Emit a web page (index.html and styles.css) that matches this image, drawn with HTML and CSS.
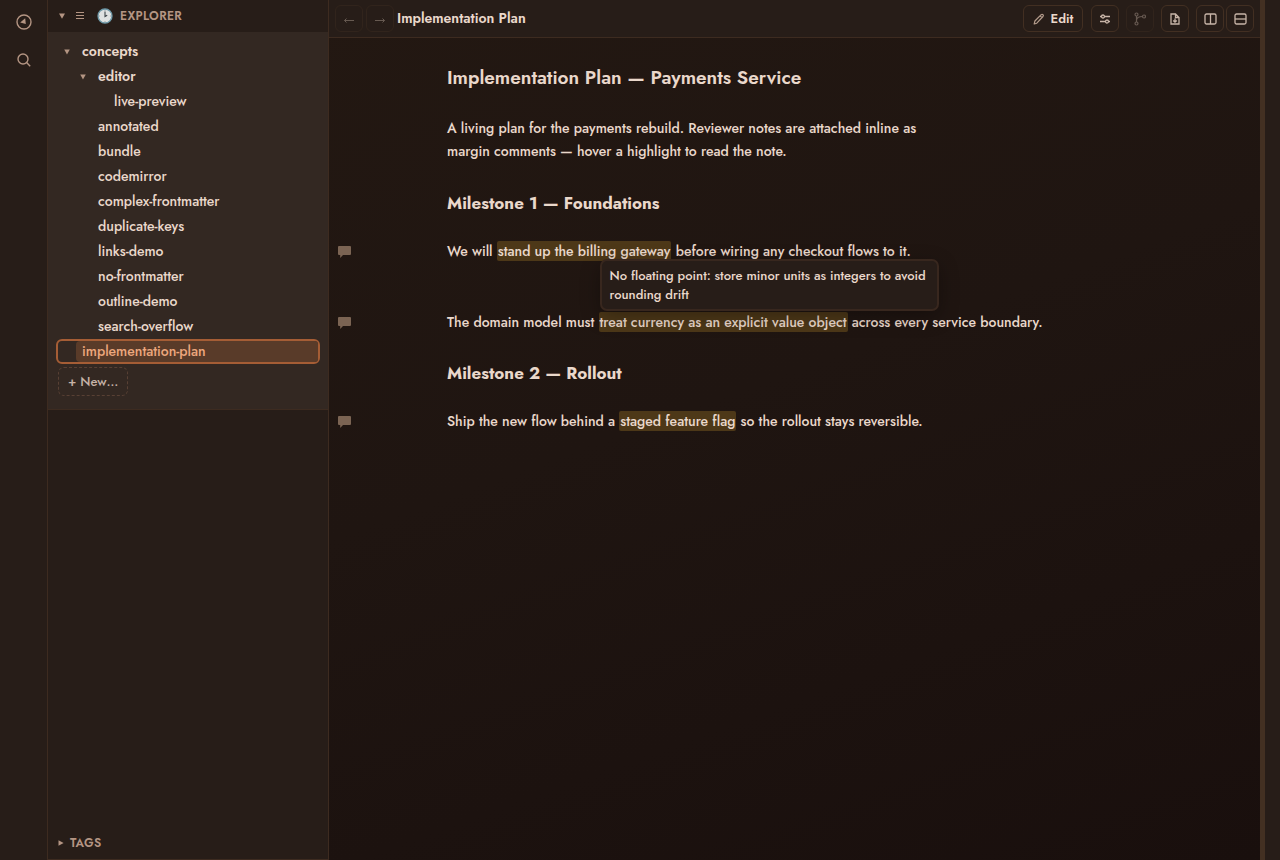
FILE: index.html
```html
<!DOCTYPE html>
<html lang="en">
<head>
<meta charset="utf-8">
<title>Implementation Plan</title>
<link rel="stylesheet" href="styles.css">
</head>
<body>
<div class="app">
  <nav class="rail" aria-label="Views">
    <button class="rail-btn" aria-label="Explorer">
      <svg width="18" height="18" viewBox="0 0 18 18" fill="none" stroke="currentColor" stroke-width="1.4"><circle cx="9" cy="9" r="7"/><path d="M5.2 9.4 10.2 5.2 10.8 11z" fill="currentColor" stroke="none"/></svg>
    </button>
    <button class="rail-btn" aria-label="Search">
      <svg width="18" height="18" viewBox="0 0 18 18" fill="none" stroke="currentColor" stroke-width="1.4"><circle cx="8" cy="8" r="5"/><path d="M11.6 11.6 15.2 15.2"/></svg>
    </button>
  </nav>

  <aside class="sidebar">
    <header class="section-head">
      <svg class="caret" width="8" height="8" viewBox="0 0 8 8"><path d="M1 1.5h6L4 6.8z" fill="currentColor"/></svg>
      <svg class="grip" width="8" height="8" viewBox="0 0 8 8"><path d="M0 .5h8M0 3.5h8M0 6.5h8" stroke="currentColor"/></svg>
      <svg class="clock" width="16" height="16" viewBox="0 0 16 16"><circle cx="8" cy="8" r="7" fill="#dfe2e1" stroke="#6e99a8" stroke-width="1.3"/><path d="M8 3.5V8.5L10.2 7.2" fill="none" stroke="#3d4549" stroke-width="1.1"/><path d="M8 2v1M8 13v1M2 8h1M13 8h1" stroke="#8a999e" stroke-width=".8"/></svg>
      <span class="section-title">EXPLORER</span>
    </header>
    <div class="tree-panel">
      <ul class="tree">
        <li class="row level-1 folder"><svg class="caret" width="8" height="8" viewBox="0 0 8 8"><path d="M1.2 1.5h5.6L4 6.6z" fill="currentColor"/></svg><a href="#concepts">concepts</a></li>
        <li class="row level-2 folder"><svg class="caret" width="8" height="8" viewBox="0 0 8 8"><path d="M1.2 1.5h5.6L4 6.6z" fill="currentColor"/></svg><a href="#editor">editor</a></li>
        <li class="row level-3"><a href="#live-preview">live-preview</a></li>
        <li class="row level-2"><a href="#annotated">annotated</a></li>
        <li class="row level-2"><a href="#bundle">bundle</a></li>
        <li class="row level-2"><a href="#codemirror">codemirror</a></li>
        <li class="row level-2"><a href="#complex-frontmatter">complex-frontmatter</a></li>
        <li class="row level-2"><a href="#duplicate-keys">duplicate-keys</a></li>
        <li class="row level-2"><a href="#links-demo">links-demo</a></li>
        <li class="row level-2"><a href="#no-frontmatter">no-frontmatter</a></li>
        <li class="row level-2"><a href="#outline-demo">outline-demo</a></li>
        <li class="row level-2"><a href="#search-overflow">search-overflow</a></li>
        <li class="row level-1 selected"><a href="#implementation-plan">implementation-plan</a></li>
      </ul>
      <button class="new-btn">+ New…</button>
    </div>
    <footer class="tags-head">
      <svg class="caret" width="8" height="8" viewBox="0 0 8 8"><path d="M1.5 1.2v5.6L6.6 4z" fill="currentColor"/></svg>
      <span class="section-title">TAGS</span>
    </footer>
  </aside>

  <main class="main">
    <header class="toolbar">
      <div class="history">
        <button class="tool faint" disabled aria-label="Back"><svg width="12" height="12" viewBox="0 0 12 12" fill="none" stroke="currentColor"><path d="M11 7.5H1.5M3.5 5.5l-2 2 2 2"/></svg></button>
        <button class="tool faint" disabled aria-label="Forward"><svg width="12" height="12" viewBox="0 0 12 12" fill="none" stroke="currentColor"><path d="M1 7.5h9.5M8.5 5.5l2 2-2 2"/></svg></button>
      </div>
      <span class="doc-title">Implementation Plan</span>
      <div class="tools">
        <button class="tool edit"><svg width="12" height="12" viewBox="0 0 12 12" fill="none" stroke="currentColor" stroke-width="1.2" stroke-linejoin="round"><path d="M1.2 11l.7-3L8.2 1.7q1-.8 1.8 0t0 1.8L3.8 10.2zM7.2 2.8l2 2"/></svg>Edit</button>
        <button class="tool" aria-label="Properties"><svg width="12" height="12" viewBox="0 0 12 12" fill="none" stroke="currentColor" stroke-width="1.3"><circle cx="4" cy="3.5" r="1.5"/><circle cx="8" cy="8.5" r="1.5"/><path d="M1 3.5h1.5M5.5 3.5H11M1 8.5h5.5M9.5 8.5H11"/></svg></button>
        <button class="tool faint" disabled aria-label="Version graph"><svg width="12" height="14" viewBox="0 0 12 14" fill="none" stroke="currentColor" stroke-width="1.2"><circle cx="2.5" cy="2.5" r="1.5"/><circle cx="2.5" cy="11.5" r="1.5"/><circle cx="10" cy="4.5" r="1.5"/><path d="M2.5 4v6M2.5 8Q3 4.5 8.5 4.5"/></svg></button>
        <button class="tool" aria-label="Export"><svg width="10" height="12" viewBox="0 0 10 12" fill="none" stroke="currentColor" stroke-width="1.3"><path d="M1 1h4.5L9 4.5V11H1zM5.5 1v3.5H9M5 5.5V9M3.2 7.5 5 9.2 6.8 7.5"/></svg></button>
        <div class="split">
          <button class="tool" aria-label="Split right"><svg width="13" height="12" viewBox="0 0 13 12" fill="none" stroke="currentColor" stroke-width="1.3"><rect x="1" y="1" width="11" height="10" rx="1.5"/><path d="M6.5 1v10"/></svg></button>
          <button class="tool" aria-label="Split down"><svg width="13" height="12" viewBox="0 0 13 12" fill="none" stroke="currentColor" stroke-width="1.3"><rect x="1" y="1" width="11" height="10" rx="1.5"/><path d="M1 6h11"/></svg></button>
        </div>
      </div>
    </header>
    <article class="doc">
      <h1>Implementation Plan — Payments Service</h1>
      <p class="lead">A living plan for the payments rebuild. Reviewer notes are attached inline as<br>margin comments — hover a highlight to read the note.</p>
      <h2>Milestone 1 — Foundations</h2>
      <div class="noted">
        <svg class="note" width="13" height="12" viewBox="0 0 13 12"><path d="M1 0h11q1 0 1 1v7q0 1-1 1H5L2.2 12V9H1Q0 9 0 8V1Q0 0 1 0z" fill="currentColor"/></svg>
        <p>We will <mark>stand up the billing gateway</mark> before wiring any checkout flows to it.</p>
      </div>
      <div class="noted spaced">
        <svg class="note" width="13" height="12" viewBox="0 0 13 12"><path d="M1 0h11q1 0 1 1v7q0 1-1 1H5L2.2 12V9H1Q0 9 0 8V1Q0 0 1 0z" fill="currentColor"/></svg>
        <p>The domain model must <mark class="anchor">treat currency as an explicit value object<span class="tooltip" role="tooltip">No floating point: store minor units as integers to avoid rounding drift</span></mark> across every service boundary.</p>
      </div>
      <h2>Milestone 2 — Rollout</h2>
      <div class="noted">
        <svg class="note" width="13" height="12" viewBox="0 0 13 12"><path d="M1 0h11q1 0 1 1v7q0 1-1 1H5L2.2 12V9H1Q0 9 0 8V1Q0 0 1 0z" fill="currentColor"/></svg>
        <p>Ship the new flow behind a <mark>staged feature flag</mark> so the rollout stays reversible.</p>
      </div>
    </article>
  </main>
  <div class="edge"></div>
</div>
</body>
</html>
```

FILE: styles.css
```css
:root {
  --panel: #271d18;
  --line: #3d2b20;
  --text: #ead8cb;
  --muted: #b49583;
}
* { box-sizing: border-box; }
body {
  margin: 0;
  background: var(--panel);
  color: var(--text);
  font: 500 14px/23px Jost, Lato, sans-serif;
}
button { font: inherit; color: inherit; background: none; border: 0; padding: 0; }
a { color: inherit; text-decoration: none; }
svg { display: block; flex: none; }

.app {
  display: grid;
  grid-template-columns: 48px 281px minmax(0, 1fr) 20px;
  min-height: 100vh;
}
.rail {
  display: flex;
  flex-direction: column;
  align-items: center;
  gap: 20px;
  padding-top: 13px;
  border-right: 1px solid var(--line);
  color: var(--muted);
}

.sidebar {
  display: flex;
  flex-direction: column;
  border-right: 1px solid var(--line);
  border-bottom: 1px solid var(--line);
}
.section-head {
  display: flex;
  align-items: center;
  height: 32px;
  padding-left: 10px;
  color: var(--muted);
}
.grip { margin-left: 10px; }
.clock { margin-left: 13px; }
.section-title { font-size: 12px; font-weight: 600; letter-spacing: .03em; }
.section-head .section-title { margin-left: 7px; }
.tree-panel {
  background: #332822;
  padding: 7px 8px 13px;
  border-bottom: 1px solid var(--line);
}
.tree { list-style: none; margin: 0; padding: 0; }
.row {
  display: flex;
  align-items: center;
  height: 25px;
  border-radius: 6px;
}
.row .caret { margin-right: 11px; color: var(--muted); }
.level-1 { padding-left: 26px; }
.level-2 { padding-left: 42px; }
.level-3 { padding-left: 58px; }
.level-1.folder { padding-left: 7px; }
.level-2.folder { padding-left: 23px; }
.folder { font-weight: 600; }
.selected {
  border: 2px solid #a55d35;
  padding-left: 18px;
  color: #eda77d;
}
.selected a {
  flex: 1;
  line-height: 21px;
  padding-left: 6px;
  background: #593b29;
  border-radius: 4px 3px 3px 4px;
}
.new-btn {
  display: block;
  height: 29px;
  margin: 3px 2px 0;
  padding: 0 9px;
  border: 1px dashed #584034;
  border-radius: 6px;
  color: #c6b3a7;
  font-size: 13px;
}
.tags-head {
  display: flex;
  align-items: center;
  gap: 5px;
  margin-top: auto;
  height: 32px;
  padding-left: 9px;
  color: var(--muted);
}

.main { background: linear-gradient(160deg, #231812, #1f1511 45%, #190f0d); }
.toolbar {
  display: flex;
  align-items: center;
  height: 38px;
  padding: 0 6px;
  background: var(--panel);
  border-bottom: 1px solid var(--line);
}
.history { display: flex; gap: 3px; }
.doc-title { margin-left: 3px; font-weight: 600; }
.tools { display: flex; gap: 7px; margin-left: auto; }
.split { display: flex; gap: 2px; }
.tool {
  display: flex;
  align-items: center;
  justify-content: center;
  gap: 6px;
  width: 28px;
  height: 27px;
  border: 1px solid #422f22;
  border-radius: 6px;
}
.tool svg { color: #c8b5a8; }
.edit { width: 60px; margin-right: 1px; font-size: 13px; font-weight: 600; }
.edit svg { color: #b49c8c; }
.faint { opacity: .4; }

.doc { padding: 28px 9px 40px; }
h1, h2, .lead { margin-left: 109px; }
h1 { margin-top: 0; margin-bottom: 27px; font-size: 19px; line-height: 24px; font-weight: 600; }
h2 { margin-top: 25px; margin-bottom: 23px; font-size: 17px; line-height: 28px; font-weight: 700; }
p { margin: 0; }
.lead { margin-bottom: 26px; }
.noted { display: flex; align-items: center; gap: 96px; }
.noted p { flex: 1; }
.spaced { margin-top: 48px; }
.note { color: #7b6453; }
mark {
  background: #4d3818;
  color: inherit;
  padding: 0 1px;
  border-radius: 2px;
}
.anchor { position: relative; }
.tooltip {
  position: absolute;
  left: 1px;
  bottom: 21px;
  width: 339px;
  padding: 5px 8px;
  border: 2px solid #38271e;
  border-radius: 7px;
  background: var(--panel);
  box-shadow: 0 6px 20px rgba(0, 0, 0, .3);
  font-size: 13px;
  line-height: 19px;
}
.edge { border-left: 5px solid #433022; }
```
